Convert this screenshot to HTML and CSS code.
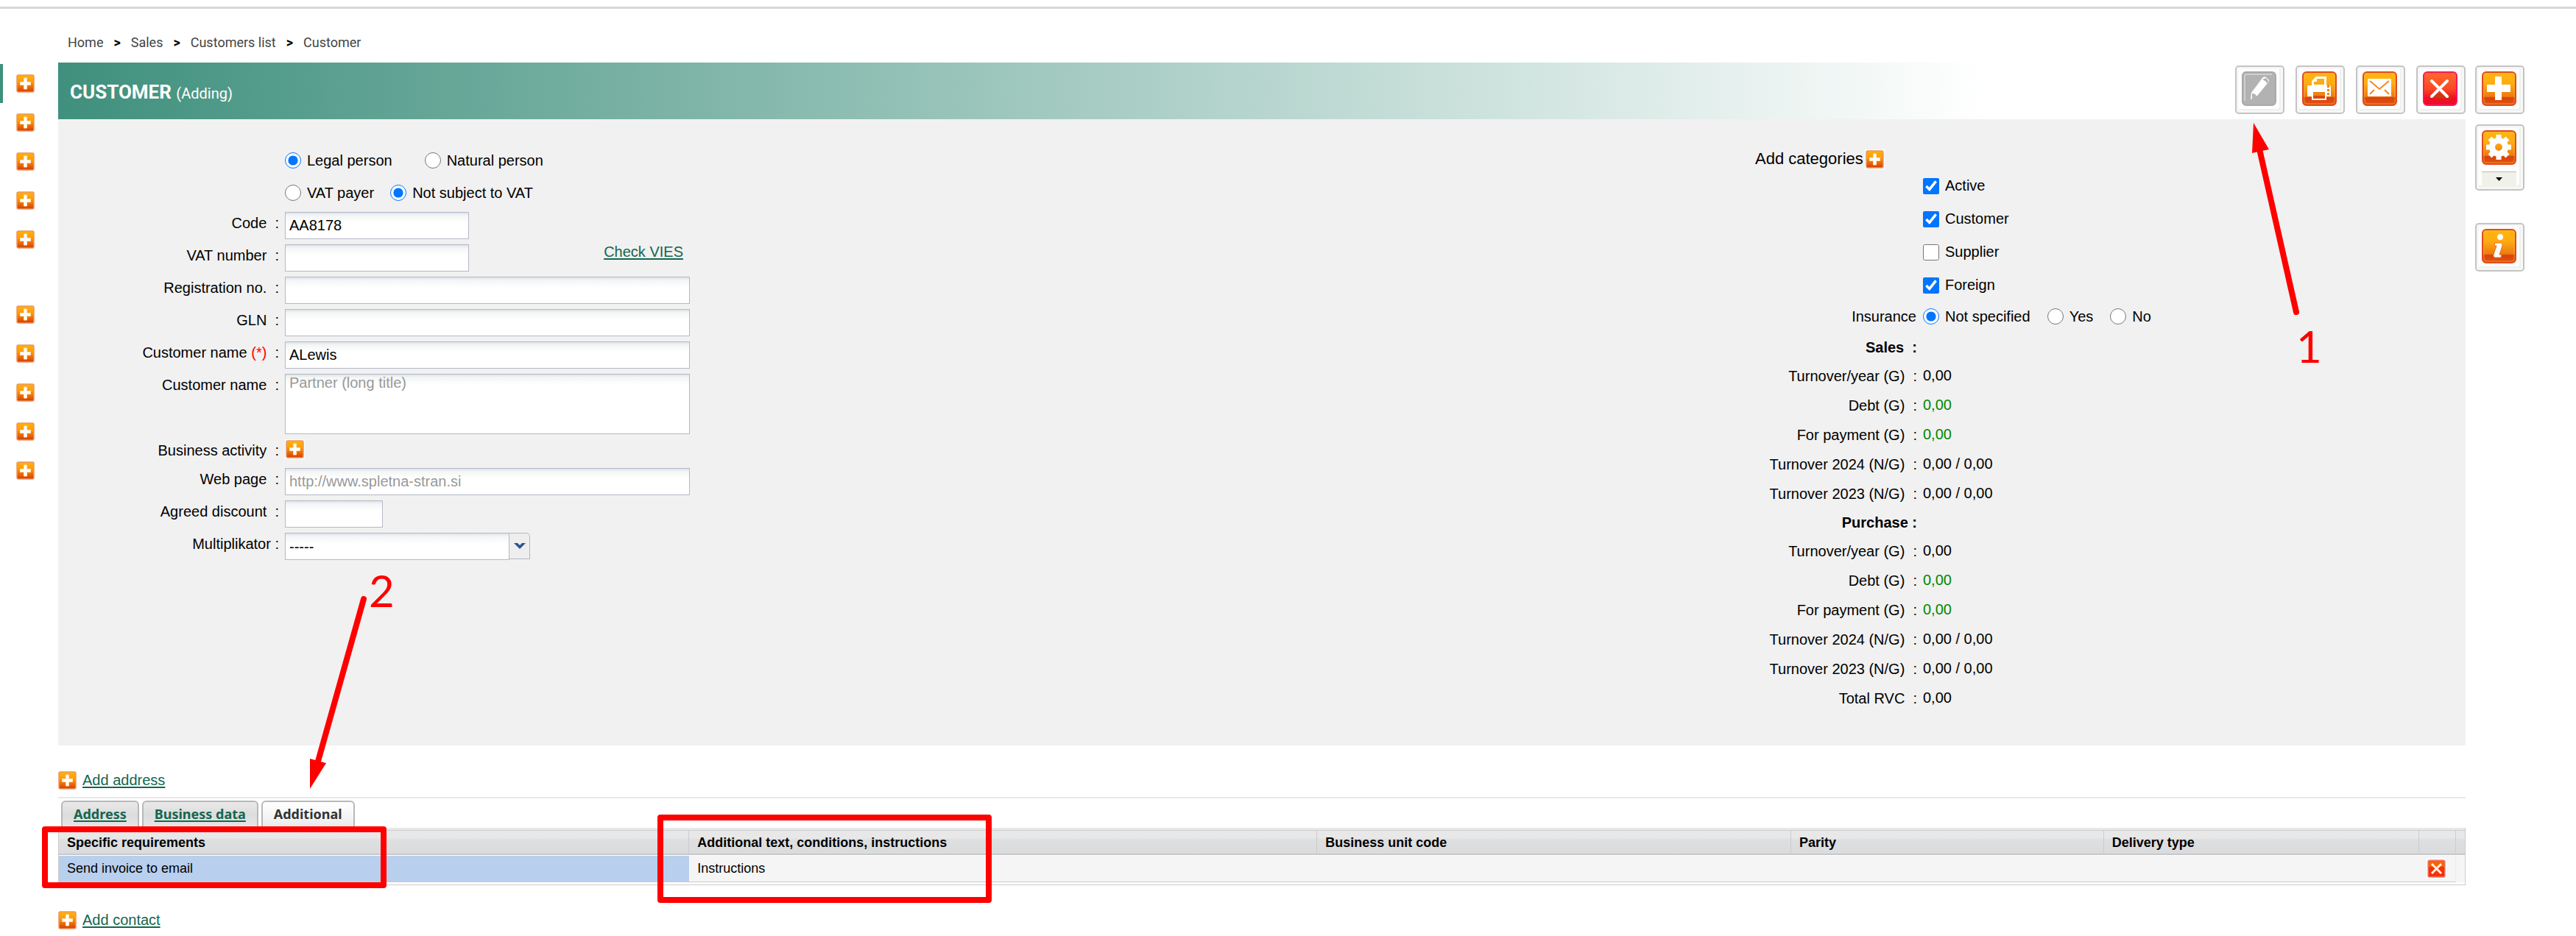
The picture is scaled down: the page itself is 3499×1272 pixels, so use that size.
FILE: index.html
```html
<!DOCTYPE html>
<html lang="en">
<head>
	<meta charset="utf-8">
	<title>Customer</title>
	<link rel="stylesheet" href="styles.css">
</head>
<body>
	<!-- shared icons -->
	<svg class="defs" width="0" height="0" aria-hidden="true">
		<defs>
			<linearGradient id="orange" x1="0" y1="0" x2="0" y2="1">
				<stop offset="0" stop-color="#ffb80c"/>
				<stop offset="0.35" stop-color="#ffab12"/>
				<stop offset="0.74" stop-color="#ec7a12"/>
				<stop offset="0.77" stop-color="#d9420c"/>
				<stop offset="1" stop-color="#e0560e"/>
			</linearGradient>
			<linearGradient id="small" x1="0" y1="0" x2="0" y2="1">
				<stop offset="0" stop-color="#ffb20a"/>
				<stop offset="0.4" stop-color="#ff9c0c"/>
				<stop offset="1" stop-color="#d63c00"/>
			</linearGradient>
			<linearGradient id="red" x1="0" y1="0" x2="0" y2="1">
				<stop offset="0" stop-color="#ff6a2c"/>
				<stop offset="0.5" stop-color="#fa4a24"/>
				<stop offset="0.78" stop-color="#ee1122"/>
				<stop offset="1" stop-color="#ee0c2c"/>
			</linearGradient>
			<symbol id="plus" viewBox="0 0 25 25">
				<rect x="1" y="1" width="23" height="23" rx="2" fill="url(#small)" stroke="#ec9660" stroke-width="1.5"/>
				<path d="M10.5 5h4v5.500h5v4h-5V20h-4v-5.500h-5v-4h5z" fill="#fff" stroke="#ffe2b8" stroke-width="1"/>
			</symbol>
			<symbol id="remove" viewBox="0 0 25 25">
				<rect x="1" y="1" width="23" height="23" rx="2" fill="#f5300a" stroke="#f4877a" stroke-width="1.5"/>
				<rect x="2" y="2" width="21" height="8" fill="#f7620c"/>
				<path d="M6 6l13 13M19 6L6 19" fill="none" stroke="#fff0d8" stroke-width="3"/>
			</symbol>
			<symbol id="tile" viewBox="0 0 47 47">
				<rect x="1" y="1" width="45" height="45" rx="5" fill="url(#orange)" stroke="#e04c1c" stroke-width="2"/>
				<rect x="3" y="3" width="41" height="41" rx="3" fill="none" stroke="#ffb347" stroke-opacity="0.6"/>
			</symbol>
		</defs>
	</svg>

	<div class="topline"></div>
	<div class="page">
		<nav class="sidebar">
			<button class="side current" aria-label="Add"><svg class="icon"><use href="#plus"/></svg></button>
			<button class="side" aria-label="Add"><svg class="icon"><use href="#plus"/></svg></button>
			<button class="side" aria-label="Add"><svg class="icon"><use href="#plus"/></svg></button>
			<button class="side" aria-label="Add"><svg class="icon"><use href="#plus"/></svg></button>
			<button class="side" aria-label="Add"><svg class="icon"><use href="#plus"/></svg></button>
			<div class="side-gap"></div>
			<button class="side" aria-label="Add"><svg class="icon"><use href="#plus"/></svg></button>
			<button class="side" aria-label="Add"><svg class="icon"><use href="#plus"/></svg></button>
			<button class="side" aria-label="Add"><svg class="icon"><use href="#plus"/></svg></button>
			<button class="side" aria-label="Add"><svg class="icon"><use href="#plus"/></svg></button>
			<button class="side" aria-label="Add"><svg class="icon"><use href="#plus"/></svg></button>
		</nav>

		<main class="main">
			<div class="crumbs">
				<a href="#">Home</a><b>&gt;</b><a href="#">Sales</a><b>&gt;</b><a href="#">Customers list</a><b>&gt;</b><a href="#">Customer</a>
			</div>

			<div class="header">
				<h1>CUSTOMER <small>(Adding)</small></h1>
				<div class="toolbar">
					<button class="tool" aria-label="Edit">
						<svg viewBox="0 0 47 47">
							<rect x="1" y="1" width="45" height="45" rx="5" fill="#b2b2b2" stroke="#a9a9a9" stroke-width="2"/>
							<path d="M4 40V6q0-2 2-2h35" fill="none" stroke="#cfcfcf" stroke-width="2"/>
							<path d="M12 38l1-9L28 9q2-3 5-1l2 2q3 2 1 5L21 33z" fill="#fff"/>
							<path d="M28 11l5-2 3 4-1 4q-2-4-7-6z" fill="#b2b2b2"/>
							<path d="M14 30q5 0 6 4l-6 3z" fill="#b2b2b2"/>
						</svg>
					</button>
					<button class="tool" aria-label="Print">
						<svg viewBox="0 0 47 47">
							<use href="#tile"/>
							<path d="M13 19v-6l6-6h14v12h5l1 2v13h-6v5H13v-5H7V19z" fill="#fff"/>
							<path d="M20 10h10v8H16v-4h4z" fill="#fbaa1a"/>
							<rect x="15" y="28" width="16" height="9" fill="#ee8414"/>
							<path d="M15 33h16v4H15z" fill="#dc4a0e"/>
							<path d="M34 19h3v3h-3zM34 24h3v3h-3zM34 29h3v3h-3z" fill="#ee8414"/>
						</svg>
					</button>
					<button class="tool" aria-label="Send mail">
						<svg viewBox="0 0 47 47">
							<use href="#tile"/>
							<rect x="7" y="10" width="32" height="24" rx="1" fill="#fff"/>
							<path d="M10 13l13 11 13-11M10 31l6-6M36 31l-6-6" fill="none" stroke="#f08a24" stroke-width="2"/>
						</svg>
					</button>
					<button class="tool" aria-label="Close">
						<svg viewBox="0 0 47 47">
							<rect x="1" y="1" width="45" height="45" rx="5" fill="url(#red)" stroke="#f8185c" stroke-width="2"/>
							<path d="M10 36l6-5h18l5 6z" fill="#c83a10"/>
							<path d="M12 13l21 21M33 13L12 34" stroke="#fff" stroke-width="4" stroke-linecap="round"/>
						</svg>
					</button>
				</div>
			</div>

			<form class="panel">
				<div class="left">
					<div class="radios">
						<label><input type="radio" name="person" checked>Legal person</label>
						<label class="far"><input type="radio" name="person">Natural person</label>
					</div>
					<div class="radios last">
						<label><input type="radio" name="vat">VAT payer</label>
						<label><input type="radio" name="vat" checked>Not subject to VAT</label>
					</div>
					<div class="row"><label for="code">Code&nbsp; :</label><input class="short" id="code" type="text" value="AA8178"></div>
					<div class="row">
						<label for="vatno">VAT number&nbsp; :</label>
						<div class="pair"><input class="short" id="vatno" type="text"><a href="#">Check VIES</a></div>
					</div>
					<div class="row"><label for="regno">Registration no.&nbsp; :</label><input id="regno" type="text"></div>
					<div class="row"><label for="gln">GLN&nbsp; :</label><input id="gln" type="text"></div>
					<div class="row"><label for="name">Customer name <i>(*)</i>&nbsp; :</label><input id="name" type="text" value="ALewis"></div>
					<div class="row"><label for="long">Customer name&nbsp; :</label><textarea id="long" placeholder="Partner (long title)"></textarea></div>
					<div class="row"><label for="activity">Business activity&nbsp; :</label><button class="add" id="activity" type="button"><svg class="icon"><use href="#plus"/></svg></button></div>
					<div class="row"><label for="web">Web page&nbsp; :</label><input id="web" type="text" placeholder="http://www.spletna-stran.si"></div>
					<div class="row"><label for="discount">Agreed discount&nbsp; :</label><input class="tiny" id="discount" type="text"></div>
					<div class="row">
						<label for="multi">Multiplikator :</label>
						<div class="combo">
							<select id="multi"><option>-----</option></select>
							<span class="trigger"><svg width="16" height="10" viewBox="0 0 16 10"><path d="M0 1h5l3 3 3-3h5L8 9z" fill="#2f4f8f"/></svg></span>
						</div>
					</div>
				</div>

				<div class="right">
					<div class="categories">Add categories <button class="add" type="button" aria-label="Add categories"><svg class="icon"><use href="#plus"/></svg></button></div>
					<div class="check"><label><input type="checkbox" checked>Active</label></div>
					<div class="check"><label><input type="checkbox" checked>Customer</label></div>
					<div class="check"><label><input type="checkbox">Supplier</label></div>
					<div class="check"><label><input type="checkbox" checked>Foreign</label></div>
					<div class="insurance">
						<span class="caption">Insurance</span>
						<label><input type="radio" name="insurance" checked>Not specified</label>
						<label><input type="radio" name="insurance">Yes</label>
						<label><input type="radio" name="insurance">No</label>
					</div>
					<h2>Sales&nbsp; :</h2>
					<dl>
						<dt>Turnover/year (G)&nbsp; :</dt><dd>0,00</dd>
						<dt>Debt (G)&nbsp; :</dt><dd class="green">0,00</dd>
						<dt>For payment (G)&nbsp; :</dt><dd class="green">0,00</dd>
						<dt>Turnover 2024 (N/G)&nbsp; :</dt><dd>0,00 / 0,00</dd>
						<dt>Turnover 2023 (N/G)&nbsp; :</dt><dd>0,00 / 0,00</dd>
					</dl>
					<h2>Purchase :</h2>
					<dl>
						<dt>Turnover/year (G)&nbsp; :</dt><dd>0,00</dd>
						<dt>Debt (G)&nbsp; :</dt><dd class="green">0,00</dd>
						<dt>For payment (G)&nbsp; :</dt><dd class="green">0,00</dd>
						<dt>Turnover 2024 (N/G)&nbsp; :</dt><dd>0,00 / 0,00</dd>
						<dt>Turnover 2023 (N/G)&nbsp; :</dt><dd>0,00 / 0,00</dd>
						<dt>Total RVC&nbsp; :</dt><dd>0,00</dd>
					</dl>
				</div>
			</form>

			<div class="addlink"><svg class="icon"><use href="#plus"/></svg><a href="#">Add address</a></div>

			<div class="tabs">
				<a href="#">Address</a>
				<a href="#">Business data</a>
				<a class="active" href="#">Additional</a>
			</div>
			<div class="grid">
				<table>
					<colgroup>
						<col class="c1"><col class="c2"><col class="c3"><col class="c4"><col class="c5"><col><col class="c7">
					</colgroup>
					<thead>
						<tr>
							<th>Specific requirements</th>
							<th>Additional text, conditions, instructions</th>
							<th>Business unit code</th>
							<th>Parity</th>
							<th>Delivery type</th>
							<th></th>
							<th></th>
						</tr>
					</thead>
					<tbody>
						<tr>
							<td class="selected">Send invoice to email</td>
							<td>Instructions</td>
							<td></td>
							<td></td>
							<td></td>
							<td class="action"><button class="add" aria-label="Remove"><svg class="icon"><use href="#remove"/></svg></button></td>
							<td class="edge"></td>
						</tr>
					</tbody>
				</table>
			</div>

			<div class="addlink"><svg class="icon"><use href="#plus"/></svg><a href="#">Add contact</a></div>
		</main>

		<aside class="tools">
			<button class="tool" aria-label="New">
				<svg viewBox="0 0 47 47">
					<use href="#tile"/>
					<path d="M18 7h9v11h12v10H27v11h-9V28H7V18h11z" fill="#fff"/>
				</svg>
			</button>
			<button class="tool tall" aria-label="Settings">
				<svg viewBox="0 0 47 47">
					<use href="#tile"/>
					<circle cx="23" cy="23" r="9" fill="none" stroke="#fff" stroke-width="8"/>
					<path d="M23 6v7M23 33v7M6 23h7M33 23h7M11 11l5 5M30 30l5 5M35 11l-5 5M16 30l-5 5" stroke="#fff" stroke-width="7"/>
				</svg>
				<span class="more"><svg width="9" height="5" viewBox="0 0 9 5"><path d="M0 0h9L4.500 5z"/></svg></span>
			</button>
			<button class="tool info" aria-label="Info">
				<svg viewBox="0 0 47 47">
					<use href="#tile"/>
					<circle cx="25" cy="11" r="4" fill="#fff"/>
					<path d="M18 19h8q3 0 2 4l-4 12 3 0-1 4h-7q-4 0-3-4l4-12h-3z" fill="#fff" stroke="#e8701a"/>
				</svg>
			</button>
		</aside>
	</div>

	<!-- step markers -->
	<div class="marks">
		<svg class="arrow arrow1" width="70" height="262" viewBox="0 0 70 262">
			<path d="M14 40L63 257" stroke="#f00" stroke-width="8" stroke-linecap="round"/>
			<path d="M5 0l21 36-23 5z" fill="#f00"/>
		</svg>
		<span class="step step1">1</span>
		<svg class="arrow arrow2" width="80" height="264" viewBox="0 0 80 264">
			<path d="M75 4L12 228" stroke="#f00" stroke-width="8" stroke-linecap="round"/>
			<path d="M2 262V221l22 6z" fill="#f00"/>
		</svg>
		<span class="step step2">2</span>
		<div class="frame frame1"></div>
		<div class="frame frame2"></div>
	</div>
</body>
</html>
```
FILE: styles.css
```css
*{
	box-sizing: border-box;
	padding: 0;
	margin: 0;
}
body{
	position: relative;
	background: #fff;
	color: #000;
	font-family: "Liberation Sans", Arial, sans-serif;
	font-size: 20px;
}
button{
	border: 0;
	background: none;
	cursor: pointer;
}
a{
	color: #14664f;
	text-underline-offset: 2px;
	text-decoration-thickness: 2px;
}
.defs{
	position: absolute;
}
.icon{
	display: block;
	width: 25px;
	height: 25px;
}
.topline{
	height: 12px;
	border-bottom: 3px solid #d8d8d8;
}
.page{
	display: grid;
	grid-template-columns: 79px 1fr 150px;
}

/* left strip */
.sidebar{
	padding-top: 75px;
}
.side{
	display: flex;
	align-items: center;
	width: 100%;
	height: 53px;
	padding-left: 18px;
	border-left: 4px solid transparent;
}
.side.current{
	border-left-color: #3f907d;
}
.side-gap{
	height: 49px;
}

/* breadcrumbs and title */
.crumbs{
	display: flex;
	gap: 14px;
	padding: 36px 13px 17px;
	font-family: Roboto, sans-serif;
	font-size: 18px;
	line-height: 20px;
}
.crumbs a{
	color: #444;
	text-decoration: none;
}
.header{
	display: flex;
	justify-content: space-between;
	height: 77px;
	padding: 4px 0 0 16px;
	background: linear-gradient(to right, #3f907d, #fff 80%);
}
h1{
	color: #fff;
	font-family: Roboto, sans-serif;
	font-size: 26px;
	line-height: 72px;
}
h1 small{
	font-size: 20px;
	font-weight: normal;
}
.toolbar{
	display: flex;
	gap: 15px;
}
.tool{
	width: 67px;
	height: 66px;
	padding: 6px 9px 10px 7px;
	border: 2px solid #c4c4c4;
	border-radius: 5px;
	background: #fff;
	box-shadow: inset 0 0 0 3px #f7f7f7, inset -5px -5px 0 #eff1ea;
}
.tool svg{
	display: block;
}

/* form */
.panel{
	display: flex;
	padding: 34px 0 44px;
	background: #f1f1f1;
}
.left{
	flex: 1;
}
.radios{
	display: flex;
	gap: 22px;
	height: 44px;
	padding-left: 308px;
}
.radios.last{
	height: 48px;
	padding-bottom: 4px;
}
.radios label, .check label, .insurance label{
	display: flex;
	align-items: center;
	gap: 8px;
}
.radios .far{
	padding-left: 22px;
}
input[type=radio], input[type=checkbox]{
	width: 22px;
	height: 22px;
}
.row{
	display: grid;
	grid-template-columns: 308px 550px;
	align-items: start;
	min-height: 32px;
	margin-bottom: 7px;
}
.row>label{
	padding-right: 8px;
	line-height: 30px;
	text-align: right;
}
.row i{
	color: #f00;
	font-style: normal;
}
input[type=text], textarea, select{
	display: block;
	width: 100%;
	height: 37px;
	padding: 0 5px;
	border: 1px solid #b5b8c8;
	border-radius: 0;
	background: linear-gradient(#dfe4e8, #f4f6f6 4px, #fff 14px);
	color: #000;
	font: 20px "Liberation Sans", Arial, sans-serif;
}
textarea{
	height: 82px;
	resize: none;
}
::placeholder{
	color: #999;
}
input.short{
	width: 250px;
}
input.tiny{
	width: 133px;
}
.pair{
	display: flex;
	justify-content: space-between;
	padding-right: 9px;
	line-height: 20px;
}
.combo{
	display: flex;
	width: 333px;
}
.combo select{
	appearance: none;
}
.trigger{
	display: flex;
	align-items: center;
	justify-content: center;
	width: 28px;
	height: 36px;
	flex-shrink: 0;
	border: 1px solid #b5b8c8;
	border-left: 0;
	border-radius: 0 5px 0 0;
	background: #eee;
}
.add{
	display: block;
	width: 27px;
	height: 27px;
	padding: 1px;
	background: #fff;
}

/* categories and totals */
.right{
	flex: 0 0 965px;
	padding-top: 6px;
}
.categories{
	display: flex;
	align-items: center;
	gap: 2px;
	height: 28px;
	font-size: 22px;
}
.check{
	display: flex;
	height: 45px;
	padding-left: 228px;
}
.insurance{
	display: flex;
	align-items: center;
	gap: 23px;
	height: 40px;
	margin-bottom: 3px;
}
.insurance .caption{
	width: 228px;
	margin-right: -23px;
	padding-right: 9px;
	text-align: right;
}
h2{
	width: 220px;
	font-size: 20px;
	line-height: 38px;
	text-align: right;
}
dl{
	display: grid;
	grid-template-columns: 220px 1fr;
	column-gap: 8px;
	line-height: 40px;
}
dt{
	text-align: right;
}
dd{
	line-height: 38px;
}
.green{
	color: #080;
}

/* links, tabs, table */
.addlink{
	display: flex;
	align-items: center;
	gap: 8px;
	height: 24px;
	margin: 35px 0 11px;
}
.tabs{
	display: flex;
	gap: 4px;
	padding: 3px 4px 0;
	border-top: 2px solid #e7e7e7;
}
.tabs a{
	height: 37px;
	padding: 0 15px;
	border: 2px solid #b8b8b8;
	border-bottom: 0;
	border-radius: 6px 6px 0 0;
	background: linear-gradient(#e9e9e9, #dcdcdc 50%, #e8e8e8);
	font: bold 18px/33px "Noto Sans", sans-serif;
}
.tabs .active{
	background: linear-gradient(#fff, #f6f6f6 50%, #e8e8e8);
	color: #333;
	text-decoration: none;
}
.grid{
	padding-bottom: 3px;
	border: 1px solid #ccc;
	border-top: 0;
}
table{
	width: 100%;
	border-top: 3px solid #e8e8e8;
	border-collapse: separate;
	border-spacing: 0;
	table-layout: fixed;
}
.c1{
	width: 26.2%;
}
.c2{
	width: 26.1%;
}
.c3{
	width: 19.7%;
}
.c4{
	width: 13%;
}
.c5{
	width: 13.1%;
}
.c7{
	width: 12px;
}
th, td{
	padding: 0 11px;
	text-align: left;
	white-space: nowrap;
}
th{
	height: 34px;
	padding-top: 2px;
	border-top: 1px solid #ccc;
	border-right: 1px solid #ccc;
	border-bottom: 2px solid #c8c8c8;
	background: linear-gradient(#e8e8e8 30%, #dedfe0 40%, #d9dbdd);
	font-size: 18px;
}
th:last-child{
	border-right: 0;
	padding: 0;
}
td{
	height: 37px;
	border-top: 1px solid #fff;
	border-bottom: 1px solid #ccc;
	background: #f5f5f5;
	font-size: 18px;
}
.selected{
	background: #b8cfee;
}
td.action{
	padding: 0 10px;
	border-right: 1px solid #ececec;
}
td.edge{
	padding: 0;
	border-bottom-color: #f5f5f5;
}

/* right strip */
.tools{
	display: flex;
	flex-direction: column;
	gap: 14px;
	padding: 77px 0 0 13px;
}
.tool.tall{
	height: 90px;
}
.more{
	display: flex;
	align-items: center;
	justify-content: center;
	height: 20px;
	margin-top: 9px;
	border-top: 1px solid #bbb;
	background: #f0f2ea;
}
.tool.info{
	margin-top: 30px;
}

/* markers lie over the page */
.marks{
	position: absolute;
	top: 0;
	left: 0;
	pointer-events: none;
}
.arrow, .step, .frame{
	position: absolute;
}
.step{
	color: #f00;
	font: 60px/60px Lato, sans-serif;
}
.frame{
	border: 8px solid #f00;
	border-radius: 4px;
}
.arrow1{
	left: 3056px;
	top: 167px;
}
.step1{
	left: 3119px;
	top: 440px;
}
.arrow2{
	left: 419px;
	top: 810px;
}
.step2{
	left: 501px;
	top: 772px;
}
.frame1{
	left: 57px;
	top: 1123px;
	width: 468px;
	height: 84px;
}
.frame2{
	left: 893px;
	top: 1107px;
	width: 454px;
	height: 120px;
}
```
